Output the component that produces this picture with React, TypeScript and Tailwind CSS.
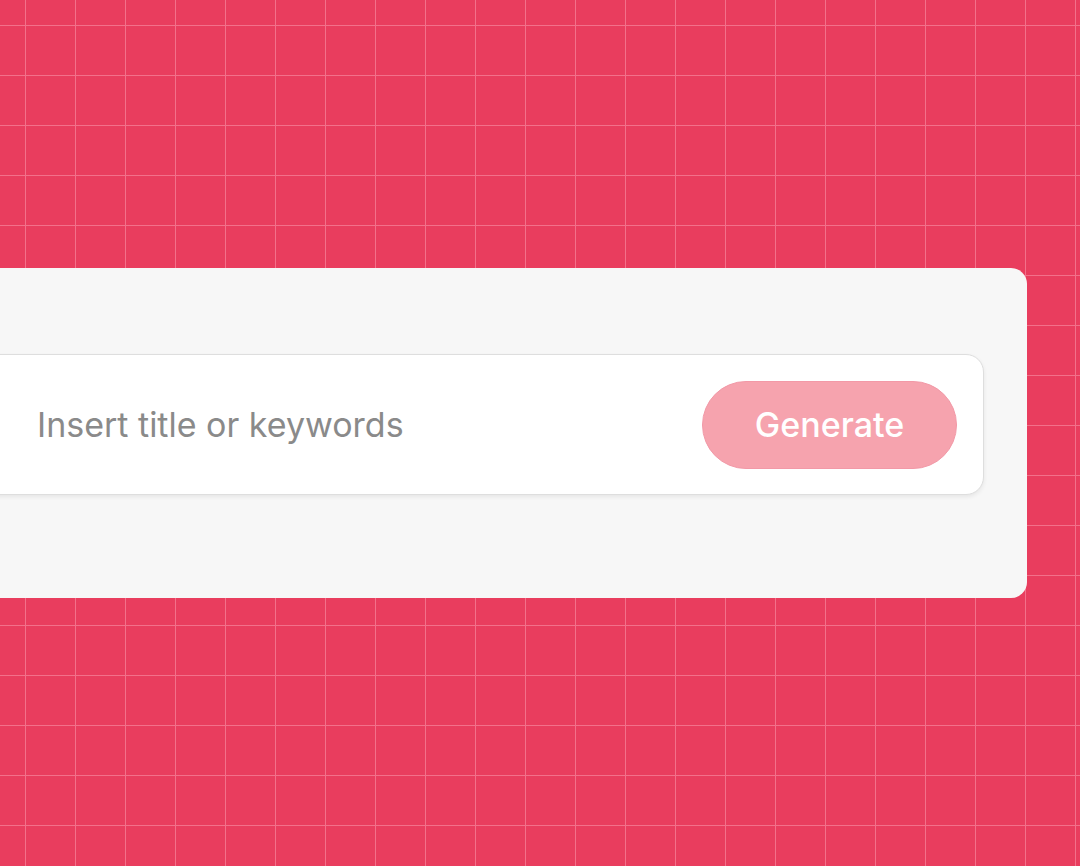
import React from "react";

export default function App() {
  return (
    <div className="relative w-[1080px] h-[866px] overflow-hidden bg-[#e93d5e] pt-[268px]">
      <div className="absolute inset-0 w-[1080px] h-[866px] bg-[linear-gradient(to_right,#f3708a_1px,transparent_1px),linear-gradient(to_bottom,#f3708a_1px,transparent_1px)] bg-[size:50px_50px] bg-[position:25px_25px]" />
      <div className="relative ml-[-60px] w-[1087px] h-[330px] rounded-[16px] bg-[#f7f7f7] pt-[86px] pl-[40px] pr-[43px]">
        <div className="flex items-center justify-between h-[141px] rounded-[18px] bg-white border border-[#dedede] shadow-[0_2px_4px_rgba(0,0,0,0.07)] pl-[56px] pr-[26px]">
          <span className="text-[34px] text-[#8a8a8a] font-['Inter',sans-serif] leading-none">
            Insert title or keywords
          </span>
          <button className="w-[255px] h-[88px] rounded-full bg-[#f6a3ae] border border-[#f299a7] text-white text-[34px] font-medium font-['Inter',sans-serif] leading-none">
            Generate
          </button>
        </div>
      </div>
    </div>
  );
}
